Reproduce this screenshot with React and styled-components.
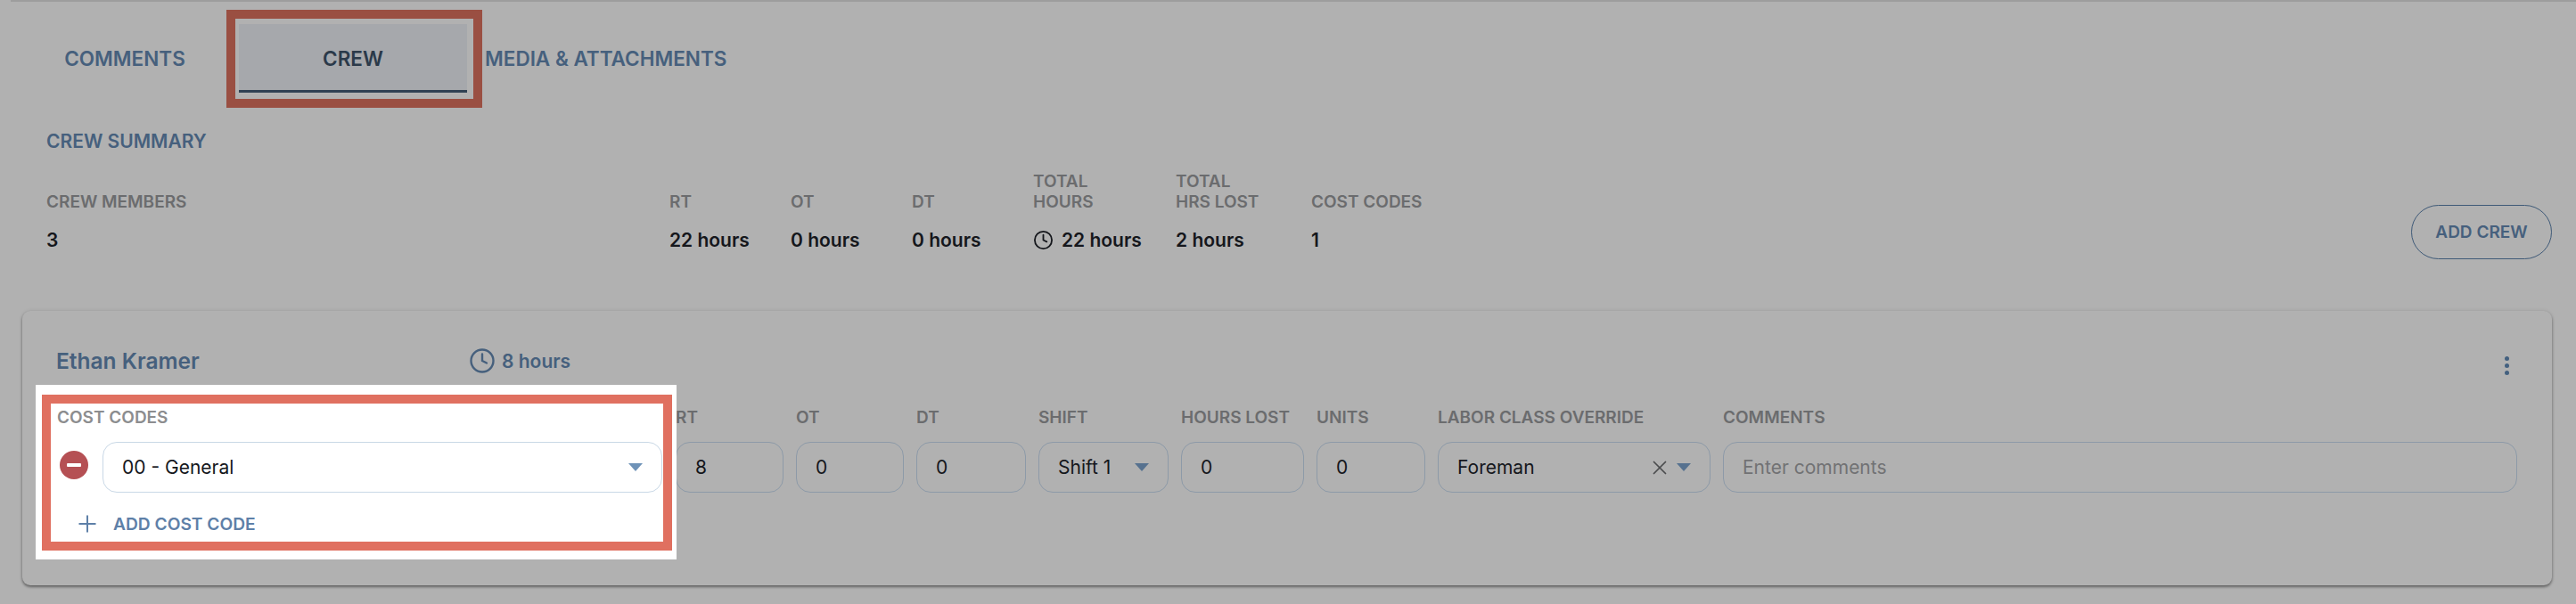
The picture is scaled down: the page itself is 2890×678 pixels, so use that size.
import React from "react";
import styled, { createGlobalStyle } from "styled-components";
import { Clock, Plus, X } from "lucide-react";

const GlobalStyle = createGlobalStyle`
  html, body {
    margin: 0;
    padding: 0;
    background: #b1b1b1;
    font-family: Inter, "Liberation Sans", sans-serif;
  }
  * {
    box-sizing: border-box;
  }
`;

const Page = styled.div`
  width: 2890px;
  height: 678px;
  overflow: hidden;
  background: #b1b1b1;
`;

const TopRule = styled.div`
  height: 2px;
  margin-left: 12px;
  background: #9d9d9d;
`;

const Tabs = styled.div`
  display: flex;
  margin: 25px 0 0 12px;
  height: 77px;
`;

const Tab = styled.div`
  position: relative;
  min-width: 256px;
  padding: 3px 20px 0;
  display: flex;
  align-items: center;
  justify-content: center;
  font-size: 22.5px;
  font-weight: 600;
  color: ${(p) => (p.$active ? "#2b3a4a" : "#46607d")};
  background: ${(p) => (p.$active ? "#a6a8ac" : "transparent")};
  border-bottom: 3px solid ${(p) => (p.$active ? "#2f4153" : "transparent")};

  ${(p) =>
    p.$active &&
    `
    &::after {
      content: "";
      position: absolute;
      top: -16px;
      left: -14px;
      right: -17px;
      bottom: -20px;
      border: 10px solid #9a4f42;
    }
  `}
`;

const SummaryTitle = styled.div`
  margin: 43px 0 0 52px;
  font-size: 21px;
  line-height: 24px;
  font-weight: 600;
  color: #46607d;
`;

const SummaryRow = styled.div`
  display: flex;
  margin: 21px 27px 0 52px;
`;

const SummaryCol = styled.div`
  width: ${(p) => p.$w}px;
  display: flex;
  flex-direction: column;
`;

const SummaryLabel = styled.div`
  height: 46px;
  display: flex;
  flex-direction: column;
  justify-content: flex-end;
  font-size: 19px;
  line-height: 23px;
  font-weight: 600;
  color: #6b6c6e;
`;

const SummaryValue = styled.div`
  margin-top: 19px;
  display: flex;
  align-items: center;
  gap: 9px;
  height: 24px;
  font-size: 21px;
  font-weight: 600;
  color: #15171c;
`;

const AddCrewButton = styled.div`
  margin: 38px 0 0 auto;
  width: 158px;
  height: 61px;
  display: flex;
  align-items: center;
  justify-content: center;
  border: 1px solid #3f5a78;
  border-radius: 31px;
  font-size: 19px;
  font-weight: 600;
  color: #46607d;
`;

const Card = styled.div`
  margin: 58px 27px 0 25px;
  height: 308px;
  padding: 43px 0 29px;
  background: #b1b1b1;
  border-radius: 9px;
  box-shadow: 0 2px 3px rgba(0, 0, 0, 0.42), 0 0 4px rgba(0, 0, 0, 0.1);
`;

const CardHeader = styled.div`
  display: flex;
  align-items: center;
  height: 26px;
  padding: 0 48px 0 38px;
`;

const MemberName = styled.div`
  width: 463px;
  font-size: 24.5px;
  font-weight: 600;
  color: #46607d;
`;

const MemberHours = styled.div`
  display: flex;
  align-items: center;
  gap: 7px;
  font-size: 21px;
  font-weight: 600;
  color: #46607d;
`;

const DotsIcon = styled.svg`
  margin: 10px 0 0 auto;
  width: 5px;
  height: 21px;
  fill: #43607f;
`;

const FieldsRow = styled.div`
  display: flex;
  gap: 14px;
  margin-top: 14px;
  padding: 0 39px 0 15px;
`;

const Field = styled.div`
  padding-top: 24px;
  ${(p) => (p.$w ? `width: ${p.$w}px;` : "flex: 1;")}
`;

const FieldLabel = styled.div`
  height: 25px;
  margin-bottom: 15px;
  font-size: 19px;
  line-height: 25px;
  font-weight: 600;
  white-space: nowrap;
  color: ${(p) => (p.$light ? "#8c8d8f" : "#6b6c6e")};
`;

const Input = styled.div`
  height: 57px;
  display: flex;
  align-items: center;
  padding: 0 ${(p) => p.$right || 21}px 0 21px;
  border: 1px solid ${(p) => (p.$light ? "#c9d8e6" : "#8d9aa8")};
  border-radius: 16px;
  font-size: 21px;
  color: ${(p) => (p.$placeholder ? "#717274" : "#15171c")};
  background: ${(p) => (p.$light ? "#ffffff" : "transparent")};
`;

const Caret = styled.span`
  margin-left: ${(p) => (p.$auto ? "auto" : "0")};
  width: 0;
  height: 0;
  border-left: 8px solid transparent;
  border-right: 8px solid transparent;
  border-top: 9px solid ${(p) => (p.$light ? "#6f93b8" : "#56718f")};
`;

const ClearIcon = styled(X)`
  margin-left: auto;
  margin-right: 6px;
  color: #4b4c4e;
`;

const CostHighlight = styled.div`
  position: relative;
  z-index: 1;
  width: 719px;
  height: 196px;
  margin-right: -15px;
  padding: 11px 5px 10px 7px;
  background: #ffffff;
`;

const CostFrame = styled.div`
  height: 175px;
  padding: 3px 1px 0 7px;
  border: 10px solid #e07060;
`;

const CostRow = styled.div`
  display: flex;
  align-items: center;
  gap: 16px;
  padding-left: 3px;
`;

const CostSelect = styled(Input)`
  flex: 1;
`;

const MinusIcon = styled.svg`
  width: 32px;
  height: 32px;
  margin-top: -6px;
`;

const AddCode = styled.div`
  display: flex;
  align-items: center;
  gap: 14px;
  height: 30px;
  margin: 20px 0 0 19px;
  font-size: 19.2px;
  font-weight: 600;
  color: #5e80a8;
`;

const summary = [
  { w: 699, label: ["CREW MEMBERS"], value: "3" },
  { w: 136, label: ["RT"], value: "22 hours" },
  { w: 136, label: ["OT"], value: "0 hours" },
  { w: 136, label: ["DT"], value: "0 hours" },
  { w: 160, label: ["TOTAL", "HOURS"], value: "22 hours", clock: true },
  { w: 152, label: ["TOTAL", "HRS LOST"], value: "2 hours" },
  { w: 150, label: ["COST CODES"], value: "1" },
];

export default function App() {
  return (
    <Page>
      <GlobalStyle />
      <TopRule />
      <Tabs>
        <Tab>COMMENTS</Tab>
        <Tab $active>CREW</Tab>
        <Tab>MEDIA &amp; ATTACHMENTS</Tab>
      </Tabs>

      <SummaryTitle>CREW SUMMARY</SummaryTitle>
      <SummaryRow>
        {summary.map((s) => (
          <SummaryCol key={s.label.join()} $w={s.w}>
            <SummaryLabel>
              {s.label.map((l) => (
                <span key={l}>{l}</span>
              ))}
            </SummaryLabel>
            <SummaryValue>
              {s.clock && <Clock size={23} strokeWidth={1.9} />}
              {s.value}
            </SummaryValue>
          </SummaryCol>
        ))}
        <AddCrewButton>ADD CREW</AddCrewButton>
      </SummaryRow>

      <Card>
        <CardHeader>
          <MemberName>Ethan Kramer</MemberName>
          <MemberHours>
            <Clock size={30} strokeWidth={1.9} />8 hours
          </MemberHours>
          <DotsIcon viewBox="0 0 5 21">
            <circle cx="2.5" cy="2.5" r="2.5" />
            <circle cx="2.5" cy="10.5" r="2.5" />
            <circle cx="2.5" cy="18.5" r="2.5" />
          </DotsIcon>
        </CardHeader>

        <FieldsRow>
          <CostHighlight>
            <CostFrame>
              <FieldLabel $light>COST CODES</FieldLabel>
              <CostRow>
                <MinusIcon viewBox="0 0 32 32">
                  <circle cx="16" cy="16" r="16" fill="#b55054" />
                  <rect x="8" y="14" width="16" height="4" rx="1" fill="#ffffff" />
                </MinusIcon>
                <CostSelect as="div" $light>
                  00 - General
                  <Caret $auto $light />
                </CostSelect>
              </CostRow>
              <AddCode>
                <Plus size={30} strokeWidth={1.6} />
                ADD COST CODE
              </AddCode>
            </CostFrame>
          </CostHighlight>

          <Field $w={121}>
            <FieldLabel>RT</FieldLabel>
            <Input>8</Input>
          </Field>
          <Field $w={121}>
            <FieldLabel>OT</FieldLabel>
            <Input>0</Input>
          </Field>
          <Field $w={123}>
            <FieldLabel>DT</FieldLabel>
            <Input>0</Input>
          </Field>
          <Field $w={146}>
            <FieldLabel>SHIFT</FieldLabel>
            <Input $right={21}>
              Shift 1
              <Caret $auto />
            </Input>
          </Field>
          <Field $w={138}>
            <FieldLabel>HOURS LOST</FieldLabel>
            <Input>0</Input>
          </Field>
          <Field $w={122}>
            <FieldLabel>UNITS</FieldLabel>
            <Input>0</Input>
          </Field>
          <Field $w={306}>
            <FieldLabel>LABOR CLASS OVERRIDE</FieldLabel>
            <Input $right={21}>
              Foreman
              <ClearIcon size={26} strokeWidth={1.6} />
              <Caret />
            </Input>
          </Field>
          <Field>
            <FieldLabel>COMMENTS</FieldLabel>
            <Input $placeholder>Enter comments</Input>
          </Field>
        </FieldsRow>
      </Card>
    </Page>
  );
}
